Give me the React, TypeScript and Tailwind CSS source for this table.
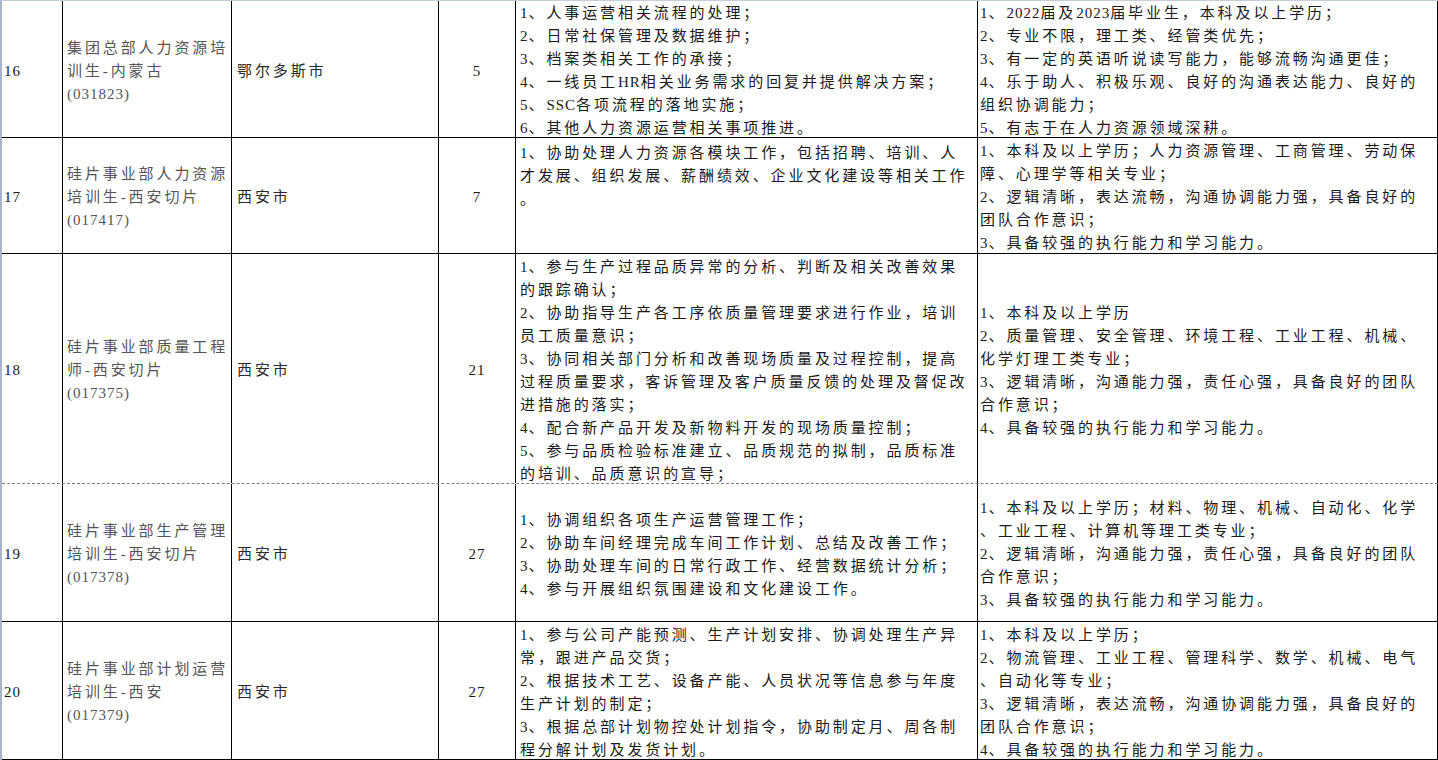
import React from 'react';

type Row = {
  no: string;
  title: string[];
  city: string;
  count: string;
  duty: string[];
  dutyTop?: boolean;
  req: string[];
  height: string;
  bottom: string;
};

const rows: Row[] = [
  {
    no: '16',
    title: ['集团总部人力资源培', '训生-内蒙古', '(031823)'],
    city: '鄂尔多斯市',
    count: '5',
    duty: [
      '1、人事运营相关流程的处理；',
      '2、日常社保管理及数据维护；',
      '3、档案类相关工作的承接；',
      '4、一线员工HR相关业务需求的回复并提供解决方案；',
      '5、SSC各项流程的落地实施；',
      '6、其他人力资源运营相关事项推进。',
    ],
    req: [
      '1、2022届及2023届毕业生，本科及以上学历；',
      '2、专业不限，理工类、经管类优先；',
      '3、有一定的英语听说读写能力，能够流畅沟通更佳；',
      '4、乐于助人、积极乐观、良好的沟通表达能力、良好的',
      '组织协调能力；',
      '5、有志于在人力资源领域深耕。',
    ],
    height: 'h-[137px]',
    bottom: 'border-b border-black',
  },
  {
    no: '17',
    title: ['硅片事业部人力资源', '培训生-西安切片', '(017417)'],
    city: '西安市',
    count: '7',
    duty: [
      '1、协助处理人力资源各模块工作，包括招聘、培训、人',
      '才发展、组织发展、薪酬绩效、企业文化建设等相关工作',
      '。',
    ],
    dutyTop: true,
    req: [
      '1、本科及以上学历；人力资源管理、工商管理、劳动保',
      '障、心理学等相关专业；',
      '2、逻辑清晰，表达流畅，沟通协调能力强，具备良好的',
      '团队合作意识；',
      '3、具备较强的执行能力和学习能力。',
    ],
    height: 'h-[116px]',
    bottom: 'border-b border-black',
  },
  {
    no: '18',
    title: ['硅片事业部质量工程', '师-西安切片', '(017375)'],
    city: '西安市',
    count: '21',
    duty: [
      '1、参与生产过程品质异常的分析、判断及相关改善效果',
      '的跟踪确认；',
      '2、协助指导生产各工序依质量管理要求进行作业，培训',
      '员工质量意识；',
      '3、协同相关部门分析和改善现场质量及过程控制，提高',
      '过程质量要求，客诉管理及客户质量反馈的处理及督促改',
      '进措施的落实；',
      '4、配合新产品开发及新物料开发的现场质量控制；',
      '5、参与品质检验标准建立、品质规范的拟制，品质标准',
      '的培训、品质意识的宣导；',
    ],
    req: [
      '1、本科及以上学历',
      '2、质量管理、安全管理、环境工程、工业工程、机械、',
      '化学灯理工类专业；',
      '3、逻辑清晰，沟通能力强，责任心强，具备良好的团队',
      '合作意识；',
      '4、具备较强的执行能力和学习能力。',
    ],
    height: 'h-[230px]',
    bottom: 'border-b border-dashed border-[#7f7f7f]',
  },
  {
    no: '19',
    title: ['硅片事业部生产管理', '培训生-西安切片', '(017378)'],
    city: '西安市',
    count: '27',
    duty: [
      '1、协调组织各项生产运营管理工作；',
      '2、协助车间经理完成车间工作计划、总结及改善工作；',
      '3、协助处理车间的日常行政工作、经营数据统计分析；',
      '4、参与开展组织氛围建设和文化建设工作。',
    ],
    req: [
      '1、本科及以上学历；材料、物理、机械、自动化、化学',
      '、工业工程、计算机等理工类专业；',
      '2、逻辑清晰，沟通能力强，责任心强，具备良好的团队',
      '合作意识；',
      '3、具备较强的执行能力和学习能力。',
    ],
    height: 'h-[138px]',
    bottom: 'border-b border-black',
  },
  {
    no: '20',
    title: ['硅片事业部计划运营', '培训生-西安', '(017379)'],
    city: '西安市',
    count: '27',
    duty: [
      '1、参与公司产能预测、生产计划安排、协调处理生产异',
      '常，跟进产品交货；',
      '2、根据技术工艺、设备产能、人员状况等信息参与年度',
      '生产计划的制定；',
      '3、根据总部计划物控处计划指令，协助制定月、周各制',
      '程分解计划及发货计划。',
    ],
    req: [
      '1、本科及以上学历；',
      '2、物流管理、工业工程、管理科学、数学、机械、电气',
      '、自动化等专业；',
      '3、逻辑清晰，表达流畅，沟通协调能力强，具备良好的',
      '团队合作意识；',
      '4、具备较强的执行能力和学习能力。',
    ],
    height: 'h-[138px]',
    bottom: 'border-b border-black',
  },
];

// latin runs get tighter spacing, like the half-width glyphs of the sheet font
function Text({ s }: { s: string }) {
  const parts = s.split(/([A-Za-z0-9()]+)/);
  return (
    <>
      {parts.map((p, i) =>
        i % 2 === 1 ? (
          <span key={i} className="tracking-[1px]">
            {p}
          </span>
        ) : (
          <React.Fragment key={i}>{p}</React.Fragment>
        )
      )}
    </>
  );
}

function Lines({ lines }: { lines: string[] }) {
  return (
    <div>
      {lines.map((l, i) => (
        <div key={i} className="whitespace-nowrap">
          <Text s={l} />
        </div>
      ))}
    </div>
  );
}

export default function App() {
  return (
    <div
      className="w-[1438px] h-[760px] overflow-hidden bg-white border-t border-[#c5cddb] border-l-2 border-l-[#a9b4c6] text-[15px] leading-[23px] tracking-[2.9px] text-[#1a1a1a]"
      style={{ fontFamily: '"Liberation Serif", "Noto Sans CJK SC", serif' }}
    >
      {rows.map((r) => (
        <div
          key={r.no}
          className={`grid grid-cols-[61px_169px_207px_77px_462px_460px] ${r.height} ${r.bottom}`}
        >
          <div className="flex items-center pt-[4px] pl-[2px] border-r border-black overflow-hidden">
            <Text s={r.no} />
          </div>
          <div className="flex items-center pt-[4px] pl-[4px] border-r border-black text-[#555555] overflow-hidden">
            <Lines lines={r.title} />
          </div>
          <div className="flex items-center pt-[4px] pl-[5px] border-r border-black text-[#2a2a2a] overflow-hidden">
            {r.city}
          </div>
          <div className="flex items-center justify-center pt-[4px] border-r border-black overflow-hidden">
            <Text s={r.count} />
          </div>
          <div
            className={`flex ${r.dutyTop ? 'items-start' : 'items-center'} pt-[4px] pl-[4px] border-r border-black overflow-hidden`}
          >
            <Lines lines={r.duty} />
          </div>
          <div className="flex items-center pt-[4px] pl-[2px] border-r border-black overflow-hidden">
            <Lines lines={r.req} />
          </div>
        </div>
      ))}
    </div>
  );
}
